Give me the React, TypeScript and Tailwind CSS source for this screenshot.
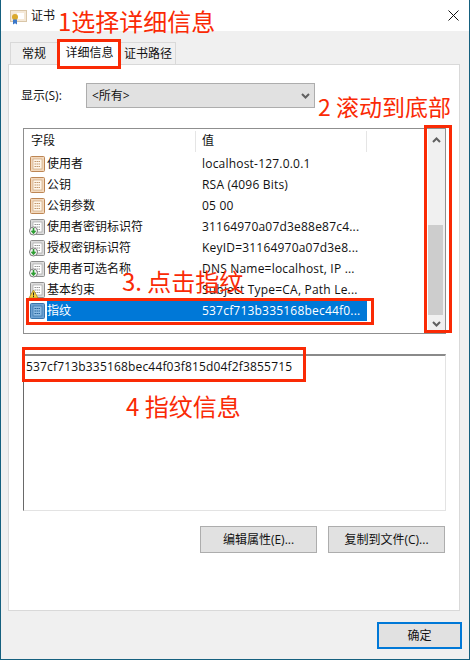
const UI_FONT = "font-['Open_Sans','Noto_Sans_CJK_SC',sans-serif] text-[12px] text-[#111]";

type IconKind = "plain" | "key" | "warn" | "selected";

const rows: { name: string; value: string; icon: IconKind }[] = [
  { name: "使用者", value: "localhost-127.0.0.1", icon: "plain" },
  { name: "公钥", value: "RSA (4096 Bits)", icon: "plain" },
  { name: "公钥参数", value: "05 00", icon: "plain" },
  { name: "使用者密钥标识符", value: "31164970a07d3e88e87c4...", icon: "key" },
  { name: "授权密钥标识符", value: "KeyID=31164970a07d3e8...", icon: "key" },
  { name: "使用者可选名称", value: "DNS Name=localhost, IP ...", icon: "key" },
  { name: "基本约束", value: "Subject Type=CA, Path Le...", icon: "warn" },
  { name: "指纹", value: "537cf713b335168bec44f0...", icon: "selected" },
];

function FieldIcon({ kind }: { kind: IconKind }) {
  const tan = kind === "plain";
  const blue = kind === "selected";
  const stroke = tan ? "#bd8654" : blue ? "#3a74aa" : "#8f8f8f";
  const fill = tan ? "#f3d9bd" : blue ? "#6ea3d4" : "#dcdcdc";
  const inner = tan ? "#fff6ea" : blue ? "#8dbbe3" : "#ffffff";
  const line = tan ? "#c49a70" : blue ? "#2b689f" : "#989898";
  return (
    <svg width="16" height="16" viewBox="0 0 16 16" className="shrink-0 overflow-visible">
      <rect x="0.5" y="0.5" width="14" height="15" rx="1" fill={fill} stroke={stroke} />
      <rect x="3" y="3" width="9" height="10" fill={inner} stroke={line} strokeWidth="0.6" />
      <path d="M4.5 5.5h6M4.5 8h6M4.5 10.5h6" stroke={line} strokeWidth="1" strokeDasharray="1.5 0.5" />
      {kind === "key" && (
        <g>
          <circle cx="3.5" cy="12" r="4" fill="#f4f4f4" stroke="#7d7d7d" />
          <path d="M3.5 9v5M1.5 11.8l2 2.2 2-2.2" stroke="#2e9e33" strokeWidth="1.6" fill="none" />
        </g>
      )}
      {kind === "warn" && (
        <g>
          <path d="M3.5 8L8 16H-1Z" fill="#f7cf3d" stroke="#a88a20" strokeWidth="0.8" />
          <path d="M3.5 10.5v3M3.5 14v1.2" stroke="#222" strokeWidth="1" />
        </g>
      )}
    </svg>
  );
}

function Chevron({ up }: { up?: boolean }) {
  return (
    <svg width="9" height="6" viewBox="0 0 9 6">
      <path d={up ? "M1 5l3.5-3.5L8 5" : "M1 1l3.5 3.5L8 1"} fill="none" stroke="#606060" strokeWidth="2" />
    </svg>
  );
}

function Marker({ className }: { className: string }) {
  return <div className={`absolute z-20 border-[3px] border-[#fa2a05] ${className}`} />;
}

function Note({ className, children }: { className: string; children: string }) {
  return (
    <div className={`absolute z-20 whitespace-nowrap font-['Noto_Sans_CJK_SC',sans-serif] font-normal leading-none text-[#fa2a05] ${className}`}>
      {children}
    </div>
  );
}

export default function App() {
  return (
    <div className={`relative flex h-[660px] w-[470px] flex-col overflow-hidden border-x border-b border-[#15607f] bg-[#f0f0f0] ${UI_FONT}`}>
      {/* Title bar */}
      <div className="flex h-[31px] items-center bg-white pl-[9px] pr-[9px]">
        <svg width="17" height="15" viewBox="0 0 17 15" className="mt-[3px]">
          <rect x="0.5" y="0.5" width="16" height="11" fill="#f5e9d8" stroke="#d9c6a8" />
          <rect x="7" y="3" width="7" height="6" fill="#ffffff" />
          <circle cx="5" cy="7" r="3" fill="#dba92c" />
          <path d="M3 9.5v5l2-1.3 2 1.3v-5z" fill="#3b78c9" />
        </svg>
        <span className="ml-[4px] text-[12px]">证书</span>
        <svg width="11" height="11" viewBox="0 0 11 11" className="ml-auto mr-[1px]">
          <path d="M0.5 0.5l10 10M10.5 0.5l-10 10" stroke="#111" strokeWidth="1" />
        </svg>
      </div>

      <div className="flex flex-1 flex-col pl-[7px] pr-[9px]">
        {/* Tabs */}
        <div className="flex h-[33px] items-end pl-[2px]">
          <div className="flex h-[22px] w-[48px] items-center justify-center border border-b-0 border-[#d9d9d9] bg-[#f0f0f0]">常规</div>
          <div className="z-10 -mb-px flex h-[25px] w-[63px] items-center justify-center bg-white">详细信息</div>
          <div className="flex h-[22px] w-[55px] items-center justify-center border border-b-0 border-l-0 border-[#d9d9d9] bg-[#f0f0f0]">证书路径</div>
        </div>

        {/* Panel */}
        <div className="flex h-[547px] flex-col border border-[#d9d9d9] bg-white pl-[14px] pr-[13px] pt-[18px]">
          <div className="flex h-[25px] items-center">
            <span className="ml-[-2px] w-[65px]">显示(S):</span>
            <div className="flex h-[25px] w-[229px] items-center justify-between border border-[#adadad] bg-[#e1e1e1] pl-[5px] pr-[4px]">
              <span className="pt-px">&lt;所有&gt;</span>
              <Chevron />
            </div>
          </div>

          {/* Field list */}
          <div className="mt-[20px] flex h-[206px] border border-[#8f8f8f]">
            <div className="flex-1">
              <div className="flex h-[24px] items-center">
                <div className="flex h-[21px] w-[172px] items-center border-r border-[#e5e5e5] pl-[7px]">字段</div>
                <div className="flex h-[21px] w-[171px] items-center border-r border-[#e5e5e5] pl-[6px]">值</div>
              </div>
              {rows.map((row) => (
                <div key={row.name} className="flex h-[21px] items-center">
                  <div className="flex w-[172px] items-center pl-[6px]">
                    <FieldIcon kind={row.icon} />
                    <span className={`ml-[1px] flex h-[21px] flex-1 items-center pt-px ${row.icon === "selected" ? "bg-[#0078d7] text-white" : ""}`}>{row.name}</span>
                  </div>
                  <div className={`flex h-[21px] w-[171px] items-center pl-[6px] pt-px tracking-[0.2px] ${row.icon === "selected" ? "bg-[#0078d7] text-white" : ""}`}>{row.value}</div>
                </div>
              ))}
            </div>
            {/* Scrollbar */}
            <div className="flex w-[17px] flex-col bg-[#f0f0f0]">
              <div className="flex h-[21px] items-center justify-center"><Chevron up /></div>
              <div className="mt-[75px] h-[90px] w-[15px] bg-[#cdcdcd]" />
              <div className="flex flex-1 items-center justify-center"><Chevron /></div>
            </div>
          </div>

          {/* Detail box */}
          <div className="mt-[20px] h-[157px] border border-[#e3e3e3] border-l-[#696969] border-t-2 border-t-[#8a8a8a] pl-[2px] pt-[2px] tracking-[0.17px]">
            537cf713b335168bec44f03f815d04f2f3855715
          </div>

          <div className="mt-[15px] flex justify-end gap-[11px] pr-[1px]">
            <button className="h-[27px] w-[117px] border border-[#adadad] bg-[#e1e1e1]">编辑属性(E)...</button>
            <button className="h-[27px] w-[117px] border border-[#adadad] bg-[#e1e1e1]">复制到文件(C)...</button>
          </div>
        </div>

        {/* Footer */}
        <div className="flex justify-end pt-[11px]">
          <button className="-mr-[2px] h-[27px] w-[85px] border-2 border-[#0078d7] bg-[#e1e1e1]">确定</button>
        </div>
      </div>

      {/* Annotations painted over the dialog */}
      <Marker className="left-[56px] top-[39px] h-[30px] w-[64px]" />
      <Marker className="left-[423px] top-[125px] h-[208px] w-[28px]" />
      <Marker className="left-[25px] top-[298px] h-[27px] w-[348px]" />
      <Marker className="left-[21px] top-[347px] h-[35px] w-[284px]" />
      <Note className="left-[57px] top-[9px] text-[24px]">1选择详细信息</Note>
      <Note className="left-[317px] top-[95px] text-[23px]">2 滚动到底部</Note>
      <Note className="left-[121px] top-[269px] text-[24px]">3. 点击指纹</Note>
      <Note className="left-[125px] top-[394px] text-[24px]">4 指纹信息</Note>
    </div>
  );
}
